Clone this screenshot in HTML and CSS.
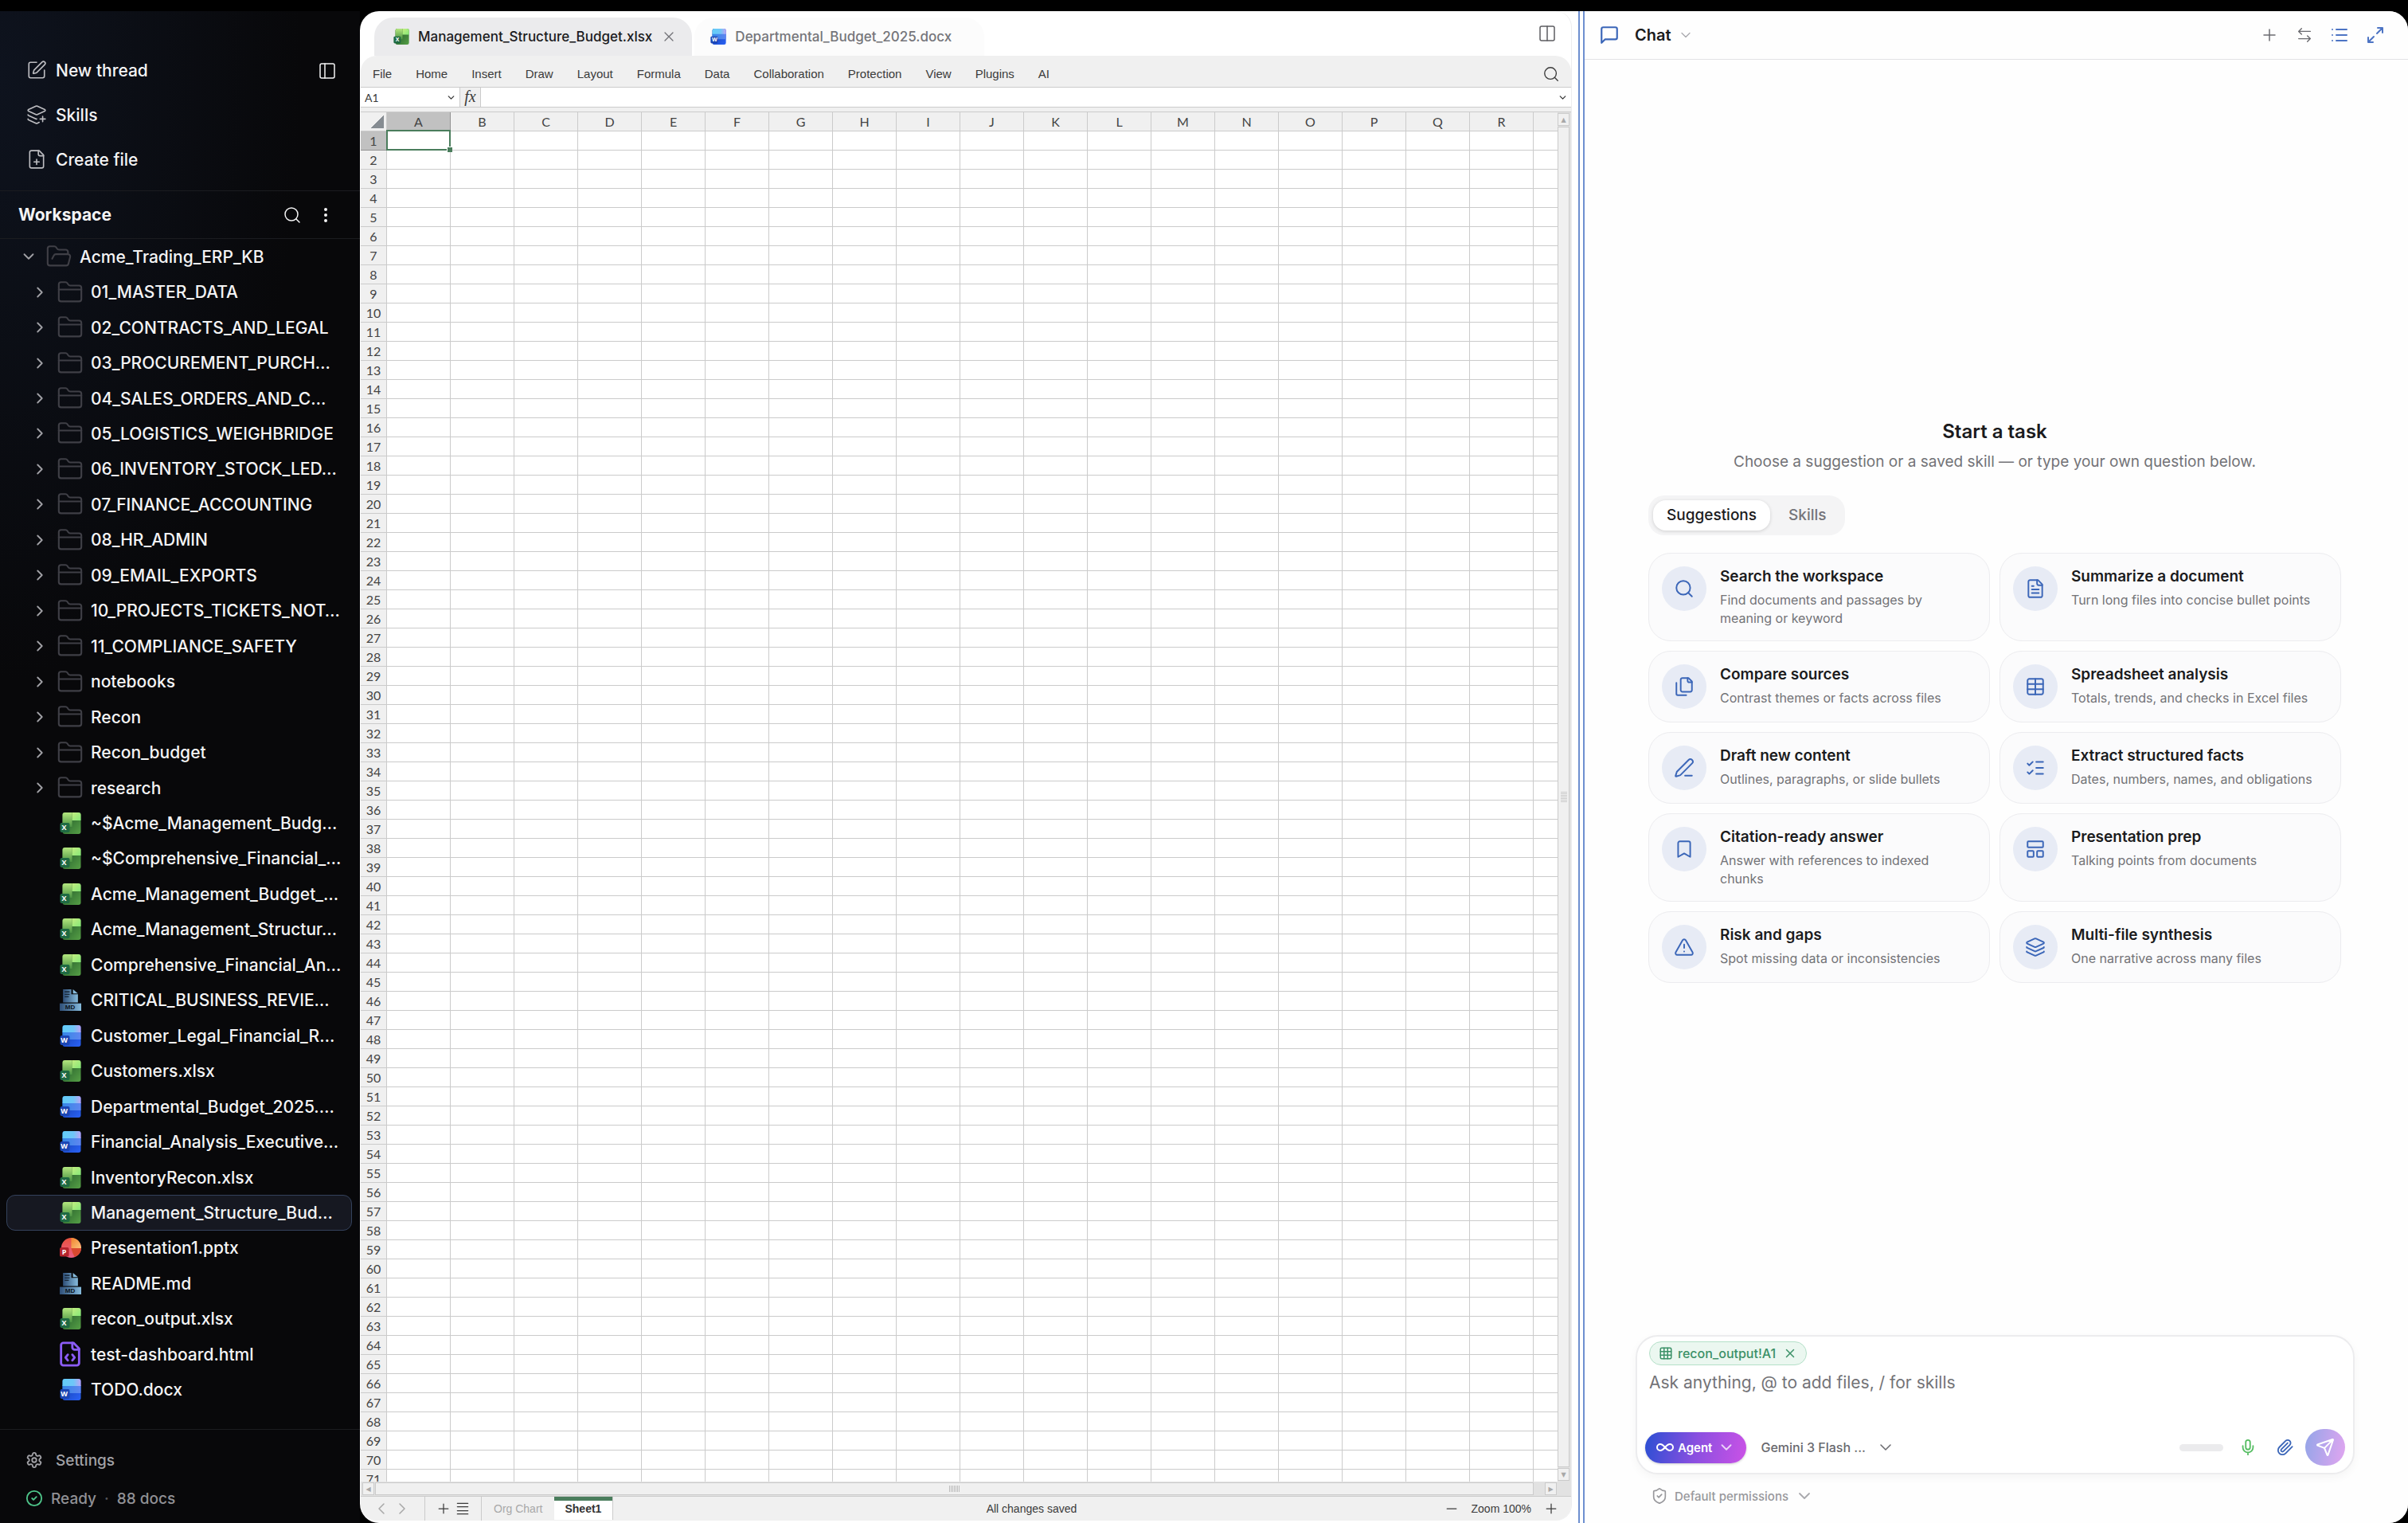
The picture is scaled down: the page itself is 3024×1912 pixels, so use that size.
FILE: index.html
```
<!DOCTYPE html>
<html lang="en">
<head>
  <meta charset="UTF-8">
  <title>Workspace</title>
  <link rel="stylesheet" href="styles.css">
</head>
<body>
  <!-- Icon sprite -->
  <svg class="sprite" aria-hidden="true">
    <defs>
      <linearGradient id="gx1" x1="0" y1="0" x2="1" y2="1"><stop offset="0" stop-color="#1d5227"/><stop offset="1" stop-color="#56a046"/></linearGradient>
      <linearGradient id="gx2" x1="0" y1="0" x2="0" y2="1"><stop offset="0" stop-color="#b4e77f"/><stop offset="1" stop-color="#4b9444"/></linearGradient>
      <linearGradient id="gx3" x1="0" y1="0" x2="1" y2="1"><stop offset="0" stop-color="#c3ee80"/><stop offset="1" stop-color="#86e878"/></linearGradient>
      <linearGradient id="gw1" x1="0" y1="0" x2="1" y2="0"><stop offset="0" stop-color="#62cdf8"/><stop offset=".6" stop-color="#6fc6f8"/><stop offset="1" stop-color="#bda4f4"/></linearGradient>
      <linearGradient id="gw2" x1="0" y1="0" x2="1" y2="0"><stop offset="0" stop-color="#3487e6"/><stop offset="1" stop-color="#5f86f0"/></linearGradient>
      <linearGradient id="gw3" x1="0" y1="0" x2="1" y2="1"><stop offset="0" stop-color="#123ca8"/><stop offset="1" stop-color="#2a62f6"/></linearGradient>
      <linearGradient id="gp1" x1="0" y1="0" x2="1" y2="1"><stop offset="0" stop-color="#f0842e"/><stop offset="1" stop-color="#fbc37c"/></linearGradient>
      <linearGradient id="gp2" x1="0" y1="0" x2="0" y2="1"><stop offset="0" stop-color="#e8523f"/><stop offset="1" stop-color="#ec5f86"/></linearGradient>
      <linearGradient id="gm1" x1="0" y1="0" x2="1" y2="0"><stop offset="0" stop-color="#2f4f78"/><stop offset="1" stop-color="#86bbdc"/></linearGradient>
    </defs>
    <symbol id="pen-square" viewBox="0 0 24 24"><path d="M12 3H5a2 2 0 0 0-2 2v14a2 2 0 0 0 2 2h14a2 2 0 0 0 2-2v-7"/><path d="M18.375 2.625a1 1 0 0 1 3 3l-9.013 9.014a2 2 0 0 1-.853.505l-2.873.84a.5.5 0 0 1-.62-.62l.84-2.873a2 2 0 0 1 .506-.852z"/></symbol>
    <symbol id="layers-plus" viewBox="0 0 24 24"><path d="M12.83 2.18a2 2 0 0 0-1.66 0L2.6 6.08a1 1 0 0 0 0 1.83l8.58 3.91a2 2 0 0 0 1.66 0l8.58-3.9a1 1 0 0 0 0-1.83z"/><path d="M16 17h6M19 14v6"/><path d="M2 12a1 1 0 0 0 .58.91l8.6 3.91a2 2 0 0 0 .82.18"/><path d="M2 17a1 1 0 0 0 .58.91l8.6 3.91a2 2 0 0 0 1.65 0l2.12-.96"/></symbol>
    <symbol id="layers" viewBox="0 0 24 24"><path d="M12.83 2.18a2 2 0 0 0-1.66 0L2.6 6.08a1 1 0 0 0 0 1.83l8.58 3.91a2 2 0 0 0 1.66 0l8.58-3.9a1 1 0 0 0 0-1.83z"/><path d="M2 12a1 1 0 0 0 .58.91l8.6 3.91a2 2 0 0 0 1.65 0l8.58-3.9A1 1 0 0 0 22 12"/><path d="M2 17a1 1 0 0 0 .58.91l8.6 3.91a2 2 0 0 0 1.65 0l8.58-3.9A1 1 0 0 0 22 17"/></symbol>
    <symbol id="file-plus" viewBox="0 0 24 24"><path d="M15 2H6a2 2 0 0 0-2 2v16a2 2 0 0 0 2 2h12a2 2 0 0 0 2-2V7Z"/><path d="M14 2v4a2 2 0 0 0 2 2h4M9 15h6M12 18v-6"/></symbol>
    <symbol id="file-text" viewBox="0 0 24 24"><path d="M15 2H6a2 2 0 0 0-2 2v16a2 2 0 0 0 2 2h12a2 2 0 0 0 2-2V7Z"/><path d="M14 2v4a2 2 0 0 0 2 2h4M10 9H8M16 13H8M16 17H8"/></symbol>
    <symbol id="file-code" viewBox="0 0 24 24"><path d="M15 2H6a2 2 0 0 0-2 2v16a2 2 0 0 0 2 2h12a2 2 0 0 0 2-2V7Z"/><path d="M14 2v4a2 2 0 0 0 2 2h4M10 12.5 8 15l2 2.5M14 12.5l2 2.5-2 2.5"/></symbol>
    <symbol id="files" viewBox="0 0 24 24"><path d="M21 7h-3a2 2 0 0 1-2-2V2"/><path d="M10 18a2 2 0 0 1-2-2V4a2 2 0 0 1 2-2h7l4 4v10a2 2 0 0 1-2 2Z"/><path d="M3 7.6v12.8A1.6 1.6 0 0 0 4.6 22h9.8"/></symbol>
    <symbol id="panel-left" viewBox="0 0 24 24"><rect x="3" y="3" width="18" height="18" rx="2"/><path d="M9 3v18"/></symbol>
    <symbol id="columns" viewBox="0 0 24 24"><rect x="3" y="3" width="18" height="18" rx="2"/><path d="M12 3v18"/></symbol>
    <symbol id="search" viewBox="0 0 24 24"><circle cx="11" cy="11" r="8"/><path d="m21 21-4.300-4.300"/></symbol>
    <symbol id="dots" viewBox="0 0 24 24"><circle cx="12" cy="12" r="1"/><circle cx="12" cy="5" r="1"/><circle cx="12" cy="19" r="1"/></symbol>
    <symbol id="chevron-down" viewBox="0 0 24 24"><path d="m6 9 6 6 6-6"/></symbol>
    <symbol id="chevron-right" viewBox="0 0 24 24"><path d="m9 18 6-6-6-6"/></symbol>
    <symbol id="chevron-left" viewBox="0 0 24 24"><path d="m15 18-6-6 6-6"/></symbol>
    <symbol id="folder-open" viewBox="0 0 24 24"><path d="m6 14 1.500-2.900A2 2 0 0 1 9.240 10H20a2 2 0 0 1 1.940 2.500l-1.540 6a2 2 0 0 1-1.950 1.500H4a2 2 0 0 1-2-2V5a2 2 0 0 1 2-2h3.900a2 2 0 0 1 1.690.9l.81 1.200a2 2 0 0 0 1.670.9H18a2 2 0 0 1 2 2v2"/></symbol>
    <symbol id="folder" viewBox="0 0 24 24"><path d="M20 20a2 2 0 0 0 2-2V8a2 2 0 0 0-2-2h-7.900a2 2 0 0 1-1.690-.9L9.600 3.900A2 2 0 0 0 7.930 3H4a2 2 0 0 0-2 2v13a2 2 0 0 0 2 2Z"/><path d="M2 9.500h20"/></symbol>
    <symbol id="gear" viewBox="0 0 24 24"><path d="M12.220 2h-.44a2 2 0 0 0-2 2v.18a2 2 0 0 1-1 1.730l-.43.25a2 2 0 0 1-2 0l-.15-.08a2 2 0 0 0-2.730.73l-.22.38a2 2 0 0 0 .73 2.730l.15.1a2 2 0 0 1 1 1.720v.51a2 2 0 0 1-1 1.740l-.15.09a2 2 0 0 0-.73 2.730l.22.38a2 2 0 0 0 2.730.73l.15-.08a2 2 0 0 1 2 0l.43.25a2 2 0 0 1 1 1.730V20a2 2 0 0 0 2 2h.44a2 2 0 0 0 2-2v-.18a2 2 0 0 1 1-1.730l.43-.25a2 2 0 0 1 2 0l.15.08a2 2 0 0 0 2.730-.73l.22-.39a2 2 0 0 0-.73-2.730l-.15-.08a2 2 0 0 1-1-1.740v-.5a2 2 0 0 1 1-1.740l.15-.09a2 2 0 0 0 .73-2.730l-.22-.38a2 2 0 0 0-2.730-.73l-.15.08a2 2 0 0 1-2 0l-.43-.25a2 2 0 0 1-1-1.730V4a2 2 0 0 0-2-2z"/><circle cx="12" cy="12" r="3"/></symbol>
    <symbol id="check-circle" viewBox="0 0 24 24"><circle cx="12" cy="12" r="10"/><path d="m9 12 2 2 4-4"/></symbol>
    <symbol id="message" viewBox="0 0 24 24"><path d="M21 15a2 2 0 0 1-2 2H7l-4 4V5a2 2 0 0 1 2-2h14a2 2 0 0 1 2 2z"/></symbol>
    <symbol id="plus" viewBox="0 0 24 24"><path d="M5 12h14M12 5v14"/></symbol>
    <symbol id="minus" viewBox="0 0 24 24"><path d="M5 12h14"/></symbol>
    <symbol id="close" viewBox="0 0 24 24"><path d="M18 6 6 18M6 6l12 12"/></symbol>
    <symbol id="swap" viewBox="0 0 24 24"><path d="M8 3 4 7l4 4M4 7h16M16 21l4-4-4-4M20 17H4"/></symbol>
    <symbol id="list" viewBox="0 0 24 24"><path d="M3 5h.01M3 12h.01M3 19h.01M8 5h13M8 12h13M8 19h13"/></symbol>
    <symbol id="menu" viewBox="0 0 24 24"><path d="M4 4h16M4 9h16M4 15h16M4 20h16"/></symbol>
    <symbol id="expand" viewBox="0 0 24 24"><path d="M15 3h6v6M21 3l-7 7M3 21l7-7M9 21H3v-6"/></symbol>
    <symbol id="table" viewBox="0 0 24 24"><rect x="3" y="3" width="18" height="18" rx="2"/><path d="M12 3v18M3 9h18M3 15h18"/></symbol>
    <symbol id="grid" viewBox="0 0 24 24"><rect x="3" y="3" width="18" height="18" rx="2"/><path d="M9 3v18M15 3v18M3 9h18M3 15h18"/></symbol>
    <symbol id="pen-line" viewBox="0 0 24 24"><path d="M13 21h8"/><path d="M21.170 6.810a1 1 0 0 0-3.990-3.990L3.840 16.170a2 2 0 0 0-.5.83l-1.320 4.350a.5.5 0 0 0 .62.62l4.350-1.320a2 2 0 0 0 .83-.5z"/></symbol>
    <symbol id="list-checks" viewBox="0 0 24 24"><path d="M13 5h8M13 12h8M13 19h8M3 17l2 2 4-4M3 7l2 2 4-4"/></symbol>
    <symbol id="bookmark" viewBox="0 0 24 24"><path d="m19 21-7-4-7 4V5a2 2 0 0 1 2-2h10a2 2 0 0 1 2 2z"/></symbol>
    <symbol id="layout" viewBox="0 0 24 24"><rect x="3" y="3" width="18" height="7" rx="1"/><rect x="3" y="14" width="7" height="7" rx="1"/><rect x="14" y="14" width="7" height="7" rx="1"/></symbol>
    <symbol id="alert" viewBox="0 0 24 24"><path d="m21.730 18-8-14a2 2 0 0 0-3.480 0l-8 14A2 2 0 0 0 4 21h16a2 2 0 0 0 1.730-3M12 9v4M12 17h.01"/></symbol>
    <symbol id="infinity" viewBox="0 0 24 24"><path d="M6 16c5 0 7-8 12-8a4 4 0 0 1 0 8c-5 0-7-8-12-8a4 4 0 1 0 0 8"/></symbol>
    <symbol id="mic" viewBox="0 0 24 24"><path d="M12 19v3M19 10v2a7 7 0 0 1-14 0v-2"/><rect x="9" y="2" width="6" height="13" rx="3"/></symbol>
    <symbol id="clip" viewBox="0 0 24 24"><path d="m21.440 11.050-9.190 9.190a6 6 0 0 1-8.490-8.490l8.570-8.570A4 4 0 1 1 18 8.840l-8.590 8.570a2 2 0 0 1-2.830-2.830l8.490-8.480"/></symbol>
    <symbol id="send" viewBox="0 0 24 24"><path d="M14.540 21.690a.5.5 0 0 0 .94-.03l6.500-19a.5.5 0 0 0-.64-.64l-19 6.500a.5.5 0 0 0-.03.94l7.930 3.180a2 2 0 0 1 1.120 1.110zM21.850 2.150l-10.940 10.940"/></symbol>
    <symbol id="shield" viewBox="0 0 24 24"><path d="M20 13c0 5-3.500 7.500-7.660 8.950a1 1 0 0 1-.67-.01C7.500 20.500 4 18 4 13V6a1 1 0 0 1 1-1c2 0 4.500-1.200 6.240-2.720a1.170 1.170 0 0 1 1.520 0C14.510 3.810 17 5 19 5a1 1 0 0 1 1 1z"/><path d="m9 12 2 2 4-4"/></symbol>
    <symbol id="xlsx" viewBox="0 0 26 27"><rect x="3" y="0" width="23" height="27" rx="3" fill="url(#gx1)"/><path d="M6 0h9v18H3V3a3 3 0 0 1 3-3z" fill="url(#gx2)"/><path d="M15 0h8a3 3 0 0 1 3 3v7H15z" fill="url(#gx3)"/><rect y="13" width="12" height="12" rx="2" fill="#1f6a43"/></symbol>
    <symbol id="docx" viewBox="0 0 26 27"><rect x="3" y="0" width="23" height="27" rx="3" fill="url(#gw3)"/><path d="M3 8h23v10H3z" fill="url(#gw2)"/><path d="M6 0h17a3 3 0 0 1 3 3v6H3V3a3 3 0 0 1 3-3z" fill="url(#gw1)"/><rect y="13" width="12" height="12" rx="2" fill="#1c46b4"/></symbol>
    <symbol id="pptx" viewBox="0 0 28 27"><circle cx="15" cy="13.500" r="13" fill="url(#gp2)"/><path d="M15 .5a13 13 0 0 1 13 13.500H15z" fill="url(#gp1)"/><path d="M15 14h13a13 13 0 0 1-8.500 11.500q-3-5-4.500-11.500z" fill="#d9492f"/><rect y="13" width="12" height="12" rx="2" fill="#b3242c"/></symbol>
    <symbol id="md" viewBox="0 0 26 26"><path d="M4 0h10v6h8v10H4z" fill="url(#gm1)"/><path d="M16 0l6 5h-6z" fill="#86bbdc"/><path d="M6 3h6M6 6h6M6 9h5" stroke="#0b1420" stroke-width="1" fill="none"/><rect y="17" width="26" height="9" fill="url(#gm1)"/></symbol>
  </svg>

  <aside class="sidebar">
    <nav class="quick">
      <button class="quick-item"><svg class="icon i26"><use href="#pen-square"/></svg>New thread</button>
      <button class="quick-item"><svg class="icon i26"><use href="#layers-plus"/></svg>Skills</button>
      <button class="quick-item"><svg class="icon i26"><use href="#file-plus"/></svg>Create file</button>
      <button class="collapse" aria-label="Collapse sidebar"><svg class="icon i24"><use href="#panel-left"/></svg></button>
    </nav>
    <div class="ws-head">
      <h2>Workspace</h2>
      <button aria-label="Search files"><svg class="icon i24"><use href="#search"/></svg></button>
      <button aria-label="More"><svg class="icon i24 dots"><use href="#dots"/></svg></button>
    </div>
    <div class="tree" id="tree"></div>
    <div class="side-foot">
      <button class="settings"><svg class="icon i22"><use href="#gear"/></svg>Settings</button>
      <div class="ready"><svg class="icon i22"><use href="#check-circle"/></svg><span>Ready</span><span class="sep">·</span><span>88 docs</span></div>
    </div>
  </aside>

  <main class="main">
    <section class="editor">
      <div class="tabs">
        <div class="tab active">
          <span class="file-icon small"><svg><use href="#xlsx"/></svg><i>X</i></span>
          <span>Management_Structure_Budget.xlsx</span>
          <button aria-label="Close tab"><svg class="icon i20"><use href="#close"/></svg></button>
        </div>
        <div class="tab">
          <span class="file-icon small"><svg><use href="#docx"/></svg><i>W</i></span>
          <span>Departmental_Budget_2025.docx</span>
        </div>
        <button class="split-btn" aria-label="Split view"><svg class="icon i24"><use href="#columns"/></svg></button>
      </div>

      <div class="sheet">
        <div class="menubar">
          <button>File</button><button>Home</button><button>Insert</button><button>Draw</button><button>Layout</button><button>Formula</button><button>Data</button><button>Collaboration</button><button>Protection</button><button>View</button><button>Plugins</button><button>AI</button>
          <button class="menu-search" aria-label="Search"><svg class="icon i22"><use href="#search"/></svg></button>
        </div>
        <div class="formula">
          <input class="name-box" aria-label="Cell name" value="A1">
          <svg class="icon caret"><use href="#chevron-down"/></svg>
          <span class="fx">fx</span>
          <input class="formula-input" aria-label="Formula">
          <svg class="icon caret"><use href="#chevron-down"/></svg>
        </div>
        <div class="grid-wrap">
          <div class="grid-view">
            <table class="grid">
              <thead><tr id="gridHead"></tr></thead>
              <tbody id="gridBody"></tbody>
            </table>
          </div>
          <div class="vscroll">
            <button class="sb" aria-label="Scroll up">▲</button>
            <div class="track"><i></i></div>
            <button class="sb" aria-label="Scroll down">▼</button>
          </div>
        </div>
        <div class="hscroll">
          <button class="sb" aria-label="Scroll left">◀</button>
          <div class="track"><i></i></div>
          <button class="sb" aria-label="Scroll right">▶</button>
        </div>
        <div class="status">
          <div class="status-nav">
            <button aria-label="Previous sheet"><svg class="icon i24"><use href="#chevron-left"/></svg></button>
            <button aria-label="Next sheet"><svg class="icon i24"><use href="#chevron-right"/></svg></button>
          </div>
          <div class="status-add">
            <button aria-label="Add sheet"><svg class="icon i20"><use href="#plus"/></svg></button>
            <button aria-label="Sheet list"><svg class="icon i20"><use href="#menu"/></svg></button>
          </div>
          <button class="sheet-tab">Org Chart</button>
          <button class="sheet-tab current">Sheet1</button>
          <span class="saved">All changes saved</span>
          <div class="zoom">
            <button aria-label="Zoom out"><svg class="icon i20"><use href="#minus"/></svg></button>
            <span>Zoom 100%</span>
            <button aria-label="Zoom in"><svg class="icon i20"><use href="#plus"/></svg></button>
          </div>
        </div>
      </div>
    </section>

    <div class="splitter"></div>

    <section class="chat">
      <header class="chat-head">
        <svg class="icon i26 chat-logo"><use href="#message"/></svg>
        <h1>Chat</h1>
        <svg class="icon i20 faint"><use href="#chevron-down"/></svg>
        <div class="chat-actions">
          <button aria-label="New chat"><svg class="icon i24"><use href="#plus"/></svg></button>
          <button aria-label="Switch side"><svg class="icon i22"><use href="#swap"/></svg></button>
          <button class="blue" aria-label="History"><svg class="icon i24"><use href="#list"/></svg></button>
          <button class="blue" aria-label="Expand"><svg class="icon i24"><use href="#expand"/></svg></button>
        </div>
      </header>

      <div class="start">
        <h2>Start a task</h2>
        <p class="lead">Choose a suggestion or a saved skill — or type your own question below.</p>
        <div class="pills">
          <button class="pill on">Suggestions</button>
          <button class="pill">Skills</button>
        </div>
        <div class="cards">
          <button class="card"><span class="disc"><svg class="icon i26"><use href="#search"/></svg></span><span class="card-text"><b>Search the workspace</b><span>Find documents and passages by meaning or keyword</span></span></button>
          <button class="card"><span class="disc"><svg class="icon i26"><use href="#file-text"/></svg></span><span class="card-text"><b>Summarize a document</b><span>Turn long files into concise bullet points</span></span></button>
          <button class="card"><span class="disc"><svg class="icon i26"><use href="#files"/></svg></span><span class="card-text"><b>Compare sources</b><span>Contrast themes or facts across files</span></span></button>
          <button class="card"><span class="disc"><svg class="icon i26"><use href="#table"/></svg></span><span class="card-text"><b>Spreadsheet analysis</b><span>Totals, trends, and checks in Excel files</span></span></button>
          <button class="card"><span class="disc"><svg class="icon i26"><use href="#pen-line"/></svg></span><span class="card-text"><b>Draft new content</b><span>Outlines, paragraphs, or slide bullets</span></span></button>
          <button class="card"><span class="disc"><svg class="icon i26"><use href="#list-checks"/></svg></span><span class="card-text"><b>Extract structured facts</b><span>Dates, numbers, names, and obligations</span></span></button>
          <button class="card"><span class="disc"><svg class="icon i26"><use href="#bookmark"/></svg></span><span class="card-text"><b>Citation-ready answer</b><span>Answer with references to indexed chunks</span></span></button>
          <button class="card"><span class="disc"><svg class="icon i26"><use href="#layout"/></svg></span><span class="card-text"><b>Presentation prep</b><span>Talking points from documents</span></span></button>
          <button class="card"><span class="disc"><svg class="icon i26"><use href="#alert"/></svg></span><span class="card-text"><b>Risk and gaps</b><span>Spot missing data or inconsistencies</span></span></button>
          <button class="card"><span class="disc"><svg class="icon i26"><use href="#layers"/></svg></span><span class="card-text"><b>Multi-file synthesis</b><span>One narrative across many files</span></span></button>
        </div>
      </div>

      <div class="dock">
        <div class="composer">
          <div class="chip"><svg class="icon i18"><use href="#grid"/></svg><span>recon_output!A1</span><button aria-label="Remove reference"><svg class="icon i18"><use href="#close"/></svg></button></div>
          <textarea aria-label="Message" placeholder="Ask anything, @ to add files, / for skills"></textarea>
          <div class="composer-row">
            <button class="agent"><svg class="icon i24"><use href="#infinity"/></svg>Agent<svg class="icon i22 agent-caret"><use href="#chevron-down"/></svg></button>
            <div class="model">
              <select aria-label="Model"><option>Gemini 3 Flash ...</option></select>
              <svg class="icon i24"><use href="#chevron-down"/></svg>
            </div>
            <div class="meter"></div>
            <button class="tool mic" aria-label="Dictate"><svg class="icon i22"><use href="#mic"/></svg></button>
            <button class="tool attach" aria-label="Attach file"><svg class="icon i22"><use href="#clip"/></svg></button>
            <button class="send" aria-label="Send"><svg class="icon i24"><use href="#send"/></svg></button>
          </div>
        </div>
        <button class="perms"><svg class="icon i22"><use href="#shield"/></svg>Default permissions<svg class="icon i24 faint"><use href="#chevron-down"/></svg></button>
      </div>
    </section>
  </main>

  <script>
    const folders = ["01_MASTER_DATA", "02_CONTRACTS_AND_LEGAL", "03_PROCUREMENT_PURCH…", "04_SALES_ORDERS_AND_C…", "05_LOGISTICS_WEIGHBRIDGE", "06_INVENTORY_STOCK_LED…", "07_FINANCE_ACCOUNTING", "08_HR_ADMIN", "09_EMAIL_EXPORTS", "10_PROJECTS_TICKETS_NOT…", "11_COMPLIANCE_SAFETY", "notebooks", "Recon", "Recon_budget", "research"];
    const files = [
      ["xlsx", "~$Acme_Management_Budg…"],
      ["xlsx", "~$Comprehensive_Financial_…"],
      ["xlsx", "Acme_Management_Budget_…"],
      ["xlsx", "Acme_Management_Structur…"],
      ["xlsx", "Comprehensive_Financial_An…"],
      ["md", "CRITICAL_BUSINESS_REVIE…"],
      ["docx", "Customer_Legal_Financial_R…"],
      ["xlsx", "Customers.xlsx"],
      ["docx", "Departmental_Budget_2025.…"],
      ["docx", "Financial_Analysis_Executive…"],
      ["xlsx", "InventoryRecon.xlsx"],
      ["xlsx", "Management_Structure_Bud…"],
      ["pptx", "Presentation1.pptx"],
      ["md", "README.md"],
      ["xlsx", "recon_output.xlsx"],
      ["file-code", "test-dashboard.html"],
      ["docx", "TODO.docx"]
    ];
    const letters = { xlsx: "X", docx: "W", pptx: "P", md: "MD" };

    function lineIcon(cls, id) {
      return `<svg class="icon ${cls}"><use href="#${id}"/></svg>`;
    }

    function fileIcon(type) {
      return `<span class="file-icon ${type}"><svg><use href="#${type}"/></svg><i>${letters[type]}</i></span>`;
    }

    function row(cls, caret, icon, name) {
      const arrow = caret ? lineIcon("i22 arrow", caret) : `<span class="arrow"></span>`;
      return `<button class="node ${cls}">${arrow}<span class="node-icon">${icon}</span><span class="node-name">${name}</span></button>`;
    }

    let html = row("root", "chevron-down", lineIcon("folder", "folder-open"), "Acme_Trading_ERP_KB");
    folders.forEach(f => { html += row("", "chevron-right", lineIcon("folder", "folder"), f); });
    files.forEach(([type, name]) => {
      const cls = name.startsWith("Management_") ? "selected" : "";
      html += row(cls, "", type === "file-code" ? lineIcon("code", type) : fileIcon(type), name);
    });
    document.getElementById("tree").innerHTML = html;

    const cols = "ABCDEFGHIJKLMNOPQR".split("");
    document.getElementById("gridHead").innerHTML =
      `<th class="corner"></th>` + cols.map((c, i) => `<th class="${i === 0 ? "hot" : ""}">${c}</th>`).join("") + `<th class="rest"></th>`;
    let body = "";
    for (let r = 1; r <= 71; r++) {
      body += `<tr><th class="${r === 1 ? "hot" : ""}">${r}</th>`;
      for (let c = 0; c <= cols.length; c++) {
        body += r === 1 && c === 0 ? `<td class="cursor"></td>` : `<td></td>`;
      }
      body += `</tr>`;
    }
    document.getElementById("gridBody").innerHTML = body;
  </script>
</body>
</html>
```
FILE: styles.css
```
* {
  box-sizing: border-box;
}
body {
  margin: 0;
  padding-top: 14px;
  height: 100vh;
  display: flex;
  background: #000;
  color: #1b1b1d;
  font-family: Inter, "Liberation Sans", sans-serif;
  font-size: 18px;
  overflow: hidden;
}
button, input, textarea, select {
  font: inherit;
  color: inherit;
  background: none;
  border: 0;
  padding: 0;
  margin: 0;
  outline: 0;
}
h1, h2, p {
  margin: 0;
}
button {
  display: flex;
  align-items: center;
  justify-content: center;
  white-space: nowrap;
}
.sprite {
  position: absolute;
  width: 0;
  height: 0;
}
.icon {
  fill: none;
  stroke: currentColor;
  stroke-width: 2;
  stroke-linecap: round;
  stroke-linejoin: round;
  flex: none;
}
.i18 { width: 18px; height: 18px; }
.i20 { width: 20px; height: 20px; }
.i22 { width: 22px; height: 22px; }
.i24 { width: 24px; height: 24px; }
.i26 { width: 26px; height: 26px; }
.faint {
  color: #a9a9ad;
}

/* Sidebar */
.sidebar {
  flex: none;
  width: 452px;
  display: flex;
  flex-direction: column;
  color: #f4f4f5;
  background: radial-gradient(ellipse 380px 760px at 0 80px, #0e131e, #08080a);
}
.quick {
  position: relative;
  height: 226px;
  padding: 46px 33px 0;
  border-bottom: 1px solid #1b1c20;
}
.quick-item {
  height: 56px;
  gap: 11px;
  font-size: 21px;
  font-weight: 500;
}
.quick-item .icon {
  color: #bdbdc1;
  stroke-width: 1.5;
}
.collapse {
  position: absolute;
  top: 63px;
  right: 29px;
}
.collapse .icon {
  stroke-width: 1.5;
}
.ws-head {
  height: 60px;
  padding: 0 31px 0 23px;
  display: flex;
  align-items: center;
  gap: 18px;
  border-bottom: 1px solid #1b1c20;
}
.ws-head h2 {
  flex: 1;
  font-size: 21px;
  font-weight: 700;
}
.ws-head .icon {
  stroke-width: 1.5;
}
.ws-head .dots {
  stroke-width: 2;
}
.tree {
  flex: 1;
  display: flex;
  flex-direction: column;
  padding: 0 10px 27px 8px;
}
.node {
  flex: 1;
  min-height: 0;
  justify-content: flex-start;
  border: 1px solid transparent;
  border-radius: 11px;
  font-size: 21px;
  font-weight: 500;
  padding-left: 30px;
}
.node.root {
  padding-left: 16px;
}
.node.selected {
  background: #161821;
  border-color: #34425c;
}
.arrow {
  width: 22px;
  flex: none;
  color: #a1a1a6;
}
.node-icon {
  width: 34px;
  margin: 0 9px 0 10px;
  display: flex;
  justify-content: center;
  flex: none;
}
.folder {
  width: 34px;
  height: 34px;
  color: #3f3f46;
  stroke-width: 1.5;
}
.code {
  width: 34px;
  height: 34px;
  color: #8b5cf6;
}
.file-icon {
  position: relative;
  width: 27px;
  height: 27px;
  flex: none;
}
.file-icon svg {
  display: block;
  width: 100%;
  height: 100%;
}
.file-icon i {
  position: absolute;
  left: 0;
  bottom: 2px;
  width: 12px;
  font: bold 9px/12px "Open Sans", sans-serif;
  color: #fff;
  text-align: center;
}
.file-icon.md i {
  bottom: 0;
  width: 27px;
  font: bold 8px/9px "Liberation Sans", sans-serif;
  color: #0b1420;
}
.file-icon.small {
  width: 20px;
  height: 20px;
}
.file-icon.small i {
  bottom: 1px;
  width: 10px;
  font-size: 7px;
  line-height: 10px;
}
.side-foot {
  height: 118px;
  border-top: 1px solid #1b1c20;
  padding: 14px 32px 0;
  font-size: 19px;
  font-weight: 500;
}
.settings {
  height: 48px;
  gap: 16px;
  color: #a1a1a6;
}
.ready {
  height: 48px;
  display: flex;
  align-items: center;
  gap: 10px;
  color: #909095;
}
.ready .icon {
  color: #4ec58a;
}
.ready .sep {
  color: #55555a;
}

/* Main card */
.main {
  flex: 1;
  min-width: 0;
  display: flex;
  background: #fff;
  border-radius: 24px;
  overflow: hidden;
}
.editor {
  flex: 1;
  min-width: 0;
  display: flex;
  flex-direction: column;
  margin: 0 9px 3px 1px;
  border-radius: 0 20px 20px 20px;
  box-shadow: 1px 0 0 #ededef;
}
.tabs {
  display: flex;
  height: 56px;
  padding: 8px 18px 0 17px;
  gap: 3px;
}
.tab {
  display: flex;
  align-items: center;
  gap: 11px;
  padding: 0 19px 0 24px;
  border-radius: 24px 24px 0 0;
  background: #fcfcfc;
  color: #75757a;
  font-size: 17px;
  font-weight: 500;
}
.tab:not(.active) {
  padding: 0 41px 0 20px;
}
.tab.active {
  background: #ebebed;
  color: #1b1b1d;
}
.tab .icon {
  color: #6f6f74;
  stroke-width: 1.5;
}
.split-btn {
  margin-left: auto;
  height: 40px;
  color: #5c5c60;
}
.split-btn .icon {
  stroke-width: 1.5;
}
.sheet {
  flex: 1;
  min-height: 0;
  display: flex;
  flex-direction: column;
  background: #f0f0f0;
  border-radius: 20px;
  overflow: hidden;
  font-family: "Liberation Sans", Arial, sans-serif;
  color: #3b3b3b;
}
.menubar {
  display: flex;
  align-items: center;
  height: 39px;
  padding: 6px 14px 0 15px;
  gap: 30px;
  font-size: 15px;
}
.menu-search {
  margin-left: auto;
}
.menu-search .icon {
  stroke-width: 1.5;
}
.formula {
  display: flex;
  align-items: center;
  height: 26px;
  background: #fff;
  border-top: 1px solid #cbcbcb;
  border-bottom: 1px solid #cbcbcb;
}
.name-box {
  width: 107px;
  padding-left: 5px;
  font-family: Lato, sans-serif;
  font-size: 14px;
}
.caret {
  width: 13px;
  height: 13px;
  stroke-width: 2.5;
  margin-right: 4px;
}
.fx {
  width: 27px;
  height: 24px;
  border: solid #cbcbcb;
  border-width: 0 1px;
  background: #f0f0f0;
  font: italic 20px/22px "Liberation Serif", serif;
  text-align: center;
}
.formula-input {
  flex: 1;
  height: 24px;
  padding: 0 8px;
}
.grid-wrap {
  flex: 1;
  min-height: 0;
  display: flex;
  margin-top: 5px;
  border-top: 1px solid #cbcbcb;
}
.grid-view {
  flex: 1;
  min-width: 0;
  overflow: hidden;
  background: #fff;
}
.grid {
  width: 100%;
  table-layout: fixed;
  border-collapse: separate;
  border-spacing: 0;
  font-family: Lato, sans-serif;
  font-size: 16px;
  line-height: 22px;
}
.grid th, .grid td {
  width: 80px;
  height: 24px;
  padding: 0;
  border-right: 1px solid #cbcbcb;
  border-bottom: 1px solid #cbcbcb;
}
.grid th {
  background: #f0f0f0;
  font-weight: 400;
  color: #444;
}
.grid th.hot {
  background: #c1c1c1;
  border-color: #929292;
}
.grid th.corner {
  width: 33px;
  background: linear-gradient(to bottom right, transparent 50%, #868c92 50%) 13px 4px / 16px 16px no-repeat #f0f0f0;
}
.grid th.rest {
  width: auto;
}
.grid th:last-child, .grid td:last-child {
  border-right: 0;
}
.cursor {
  position: relative;
}
.cursor::before {
  content: "";
  position: absolute;
  inset: -2px -1px -1px -1px;
  border: 2px solid #4a7d5c;
}
.cursor::after {
  content: "";
  position: absolute;
  right: -3px;
  bottom: -3px;
  width: 6px;
  height: 6px;
  background: #4a7d5c;
  border: solid #fff;
  border-width: 1px 0 0 1px;
}
.vscroll {
  width: 17px;
  padding: 1px 2px 1px 0;
  display: flex;
  flex-direction: column;
  gap: 1px;
  background: #e2e2e2;
}
.sb {
  width: 15px;
  height: 16px;
  border: 1px solid #cbcbcb;
  background: #f0f0f0;
  color: #a8a8a8;
  font: 8px "DejaVu Sans", sans-serif;
}
.track {
  flex: 1;
  display: flex;
  align-items: center;
  justify-content: center;
  border: 1px solid #cbcbcb;
  background: #f0f0f0;
}
.vscroll .track i {
  width: 8px;
  height: 13px;
  background: repeating-linear-gradient(#cbcbcb 0 1px, transparent 1px 2px);
}
.hscroll {
  display: flex;
  height: 18px;
  padding: 1px 18px 1px 2px;
  background: #e2e2e2;
}
.hscroll .track {
  margin: 0 14px 0 1px;
}
.hscroll .track i {
  width: 13px;
  height: 8px;
  background: repeating-linear-gradient(90deg, #bdbdbd 0 1px, transparent 1px 2px);
}
.status {
  display: flex;
  height: 31px;
  border-top: 1px solid #cbcbcb;
  font-size: 14px;
}
.status .icon {
  stroke-width: 1.5;
}
.status-nav {
  display: flex;
  gap: 2px;
  width: 81px;
  padding-left: 14px;
  border-right: 1px solid #cbcbcb;
  color: #a8a8a8;
}
.status-add {
  display: flex;
  gap: 4px;
  width: 71px;
  padding-left: 13px;
  border-right: 1px solid #cbcbcb;
}
.sheet-tab {
  padding: 0 15px;
  color: #a8a8a8;
}
.sheet-tab.current {
  padding: 0 14px 0 13px;
  margin-bottom: 1px;
  background: #fff;
  border-right: 1px solid #cbcbcb;
  box-shadow: inset 0 5px 0 #4a7d5c;
  color: #333;
  font-weight: 700;
}
.saved {
  flex: 1;
  text-align: center;
  line-height: 30px;
  padding-left: 8px;
}
.zoom {
  display: flex;
  align-items: center;
  gap: 15px;
  padding-right: 15px;
}

/* Splitter between editor and chat */
.splitter {
  width: 8px;
  border: solid #6e8fd0;
  border-width: 0 2px;
  background: #fff;
}

/* Chat */
.chat {
  flex: none;
  width: 1034px;
  display: flex;
  flex-direction: column;
  background: #fefefe;
}
.chat-head {
  display: flex;
  align-items: center;
  height: 61px;
  padding: 0 29px 0 18px;
  border-bottom: 1px solid #e2e2e5;
}
.chat-logo {
  color: #3b66b8;
}
.chat-head h1 {
  margin: 0 8px 0 19px;
  font-size: 20px;
  font-weight: 600;
}
.chat-head .faint {
  stroke-width: 1.5;
}
.chat-actions {
  margin-left: auto;
  display: flex;
  gap: 21px;
  color: #6b6b70;
}
.chat-actions .icon {
  stroke-width: 1.5;
}
.chat-actions .blue {
  color: #4d74c4;
}
.chat-actions .blue .icon {
  stroke-width: 2;
}
.start {
  flex: 1;
  display: flex;
  flex-direction: column;
  justify-content: center;
  padding: 8px 84px 0 80px;
}
.start h2 {
  font-size: 24px;
  line-height: 32px;
  font-weight: 600;
  text-align: center;
}
.lead {
  margin: 9px 0 29px;
  font-size: 19px;
  line-height: 26px;
  text-align: center;
  color: #737377;
}
.pills {
  align-self: flex-start;
  display: flex;
  padding: 6px;
  margin-bottom: 22px;
  background: #f4f4f5;
  border-radius: 20px;
}
.pill {
  height: 38px;
  padding: 0 17px;
  border-radius: 16px;
  font-size: 19px;
  font-weight: 500;
  color: #75757a;
}
.pill:last-child {
  padding: 0 17px 0 23px;
}
.pill.on {
  background: #fff;
  color: #1b1b1d;
  box-shadow: 0 1px 4px rgba(0, 0, 0, 0.15);
}
.cards {
  display: grid;
  grid-template-columns: 1fr 1fr;
  gap: 12px;
}
.card {
  align-items: flex-start;
  justify-content: flex-start;
  gap: 17px;
  padding: 16px 24px 16px 16px;
  border: 1px solid #ececef;
  border-radius: 28px;
  background: #fbfbfc;
  text-align: left;
  white-space: normal;
}
.disc {
  flex: none;
  width: 56px;
  height: 56px;
  display: flex;
  align-items: center;
  justify-content: center;
  border-radius: 50%;
  background: #e7ebf5;
  color: #3b66b8;
}
.disc .icon {
  stroke-width: 1.8;
}
.card-text b {
  display: block;
  margin-bottom: 5px;
  font-size: 19px;
  line-height: 26px;
  font-weight: 600;
}
.card-text span {
  display: block;
  font-size: 16px;
  line-height: 23px;
  color: #737377;
}
.dock {
  padding: 0 67px 22px 64px;
}
.composer {
  display: flex;
  flex-direction: column;
  height: 175px;
  padding: 6px 10px 9px;
  border: 2px solid #ececee;
  border-radius: 28px;
  background: #fff;
  box-shadow: 0 4px 12px rgba(0, 0, 0, 0.04);
}
.chip {
  align-self: flex-start;
  display: flex;
  align-items: center;
  gap: 6px;
  height: 30px;
  padding: 0 11px;
  margin-left: 5px;
  border: 1px solid #b4e0c8;
  border-radius: 15px;
  background: #ebf7f0;
  color: #3c9168;
  font-size: 16px;
  font-weight: 500;
}
.chip button {
  margin-left: 3px;
}
.composer textarea {
  flex: 1;
  min-height: 0;
  resize: none;
  padding: 8px 5px 0;
  font-size: 21px;
  line-height: 28px;
}
.composer textarea::placeholder {
  color: #737377;
  opacity: 1;
}
.composer-row {
  display: flex;
  align-items: center;
}
.agent {
  height: 39px;
  padding: 0 14px 0 13px;
  gap: 4px;
  border-radius: 20px;
  background: linear-gradient(100deg, #2b4fd3, #8a4fe0 50%, #cb52e6);
  color: #fff;
  font-size: 15px;
  font-weight: 600;
  box-shadow: 0 1px 3px rgba(0, 0, 0, 0.2);
}
.agent-caret {
  margin-left: 3px;
  opacity: 0.75;
}
.model {
  display: flex;
  align-items: center;
  gap: 13px;
  margin: 0 auto 0 18px;
  color: #69696e;
  font-weight: 500;
}
.model select {
  appearance: none;
  font-size: 16px;
}
.model .icon {
  stroke-width: 1.5;
}
.meter {
  width: 55px;
  height: 9px;
  border-radius: 5px;
  background: #ebebed;
}
.tool {
  margin-left: 20px;
}
.mic {
  color: #55bd62;
}
.attach {
  margin-left: 25px;
  color: #3b66b8;
}
.send {
  width: 50px;
  height: 46px;
  margin-left: 14px;
  border-radius: 25px;
  background: linear-gradient(100deg, #93a5e8, #e2a5f0);
  color: #fff;
}
.perms {
  margin: 15px 0 0 19px;
  height: 24px;
  gap: 8px;
  color: #98989c;
  font-size: 15px;
  font-weight: 500;
}
.perms .icon {
  stroke-width: 1.8;
}
```
